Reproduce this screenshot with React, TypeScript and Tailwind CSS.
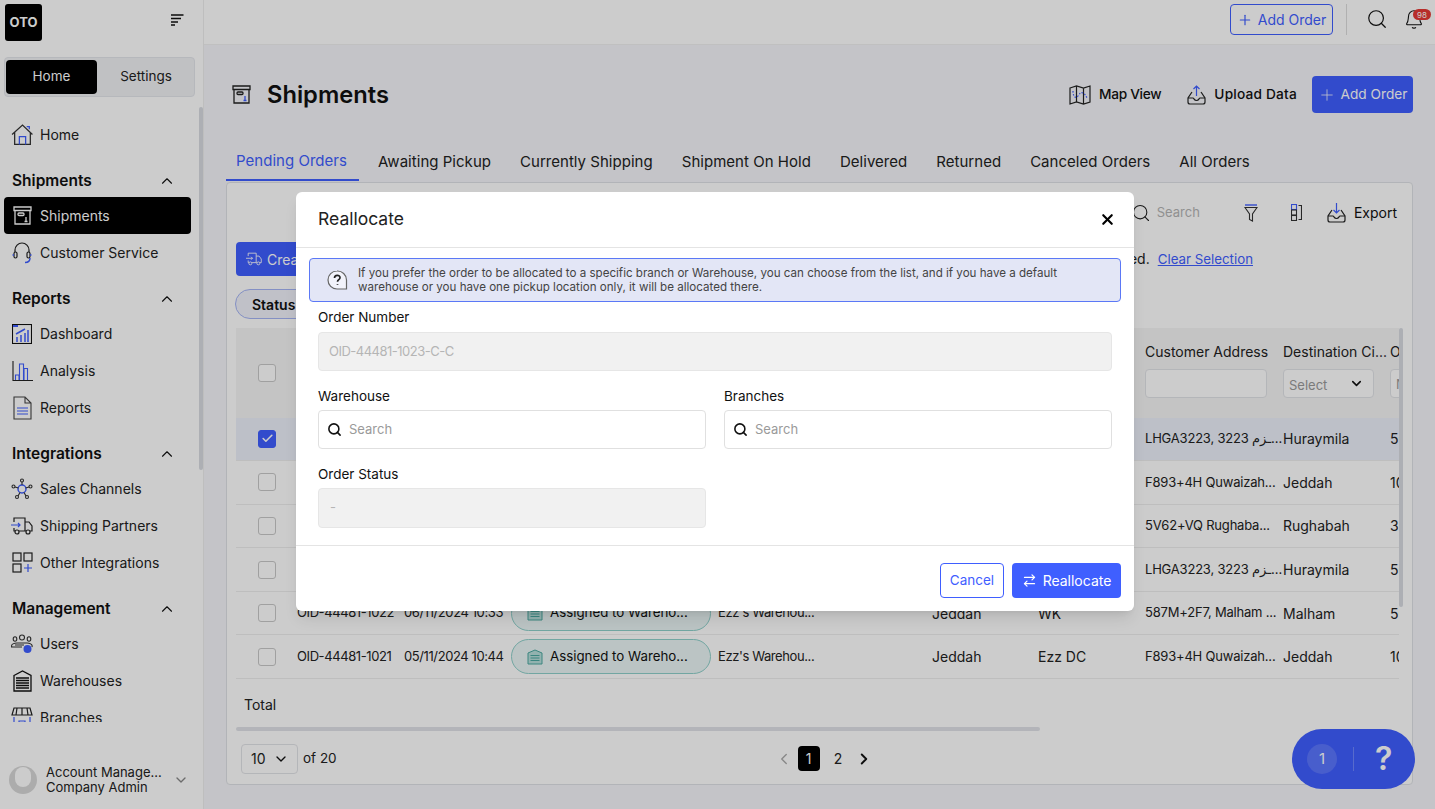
import React from "react";
import { ChevronUp, ChevronDown, ChevronLeft, ChevronRight, Plus, Search, X, Check, ArrowRightLeft } from "lucide-react";

const BLUE = "#3f5eff";

const HomeIcon = () => (
  <svg width="23" height="23" viewBox="0 0 22 22" fill="none" stroke="#333" strokeWidth="1.2">
    <path d="M1 11 11 2l9.500 9M3.500 9v11.500h15V9" />
    <path d="M8 20.500V13h6v7.500M15 3.500h2.500V6" stroke={BLUE} />
  </svg>
);
const BoxIcon = ({ color = "#222", accent = BLUE, light = false }: { color?: string; accent?: string; light?: boolean }) => (
  <svg width="19" height="19" viewBox="0 0 19 19" fill="none" stroke={light ? "#fff" : color} strokeWidth="1.300">
    <path d="M1 1h17v3.500H1zM2 4.500V18h15V4.500" />
    <rect x="5" y="7" width="6" height="2.500" rx="1" />
    <path d="M13 11v4M11.500 15.500h3" stroke={light ? "#fff" : accent} />
  </svg>
);
const HeadsetIcon = () => (
  <svg width="22" height="22" viewBox="0 0 22 22" fill="none" stroke="#222" strokeWidth="1.200">
    <path d="M4 10V8a7 7 0 0 1 14 0v2" />
    <rect x="3" y="10" width="3" height="6" rx="1.500" />
    <rect x="16" y="10" width="3" height="6" rx="1.500" />
    <path d="M19 16c0 3-2 4.500-5 4.500M1.500 13H3M19 13h1.500" stroke={BLUE} strokeWidth="1.500" />
  </svg>
);
const DashIcon = () => (
  <svg width="20" height="20" viewBox="0 0 20 20" fill="none" stroke="#111" strokeWidth="1.100">
    <rect x="0.500" y="0.500" width="19" height="19" />
    <path d="M1 2h5" stroke={BLUE} strokeWidth="2" />
    <path d="M5 13v5M9 11v7M13 9v9M16 6v12M4 10l9-5" stroke={BLUE} strokeWidth="1.500" />
  </svg>
);
const BarsIcon = () => (
  <svg width="21" height="20" viewBox="0 0 21 20" fill="none" stroke={BLUE} strokeWidth="1.100">
    <path d="M1 0v19.500h20" stroke="#222" />
    <path d="M3.500 19v-5h3.500v5M7.500 19V3h4v16M12 19V7.500h3.500V19" />
  </svg>
);
const DocIcon = () => (
  <svg width="19" height="24" viewBox="0 0 19 24" fill="none" stroke="#444" strokeWidth="1.100">
    <path d="M1 1h11l6 6v16H1zM12 1v6h6" />
    <path d="M4 12h11M4 15h11M4 18h11" stroke={BLUE} />
  </svg>
);
const HubIcon = () => (
  <svg width="22" height="22" viewBox="0 0 22 22" fill="none" stroke="#333" strokeWidth="1.100">
    <circle cx="11" cy="11" r="4" stroke={BLUE} strokeWidth="1.500" />
    <circle cx="11" cy="2.500" r="1.500" />
    <circle cx="2.500" cy="8.500" r="1.500" />
    <circle cx="19.500" cy="8.500" r="1.500" />
    <circle cx="6" cy="19" r="1.500" />
    <circle cx="16" cy="19" r="1.500" />
    <path d="M11 4v3M4 9l3.500 1M18 9l-3.500 1M7 18l2-3.500M15 18l-2-3.500" />
  </svg>
);
const TruckIcon = ({ stroke = "#222", accent = BLUE, width = 22, height = 18 }: { stroke?: string; accent?: string; width?: number; height?: number }) => (
  <svg width={width} height={height} viewBox="0 0 22 18" fill="none" stroke={stroke} strokeWidth="1.200">
    <path d="M3 5V1h11v13H8M3 11v3h1M14 5h4l3 4v5h-2M14 14h1" />
    <circle cx="6" cy="15" r="2" />
    <circle cx="17" cy="15" r="2" />
    <path d="M0 8h9M7 6l2 2-2 2" stroke={accent} />
  </svg>
);
const GridPlusIcon = () => (
  <svg width="21" height="21" viewBox="0 0 21 21" fill="none" stroke="#222" strokeWidth="1.200">
    <rect x="1" y="1" width="8" height="8" />
    <rect x="12" y="1" width="8" height="8" />
    <rect x="1" y="12" width="8" height="8" />
    <path d="M16 12v8M12 16h8" stroke={BLUE} />
  </svg>
);
const UsersIcon = () => (
  <svg width="24" height="20" viewBox="0 0 24 20" fill="none" stroke="#333" strokeWidth="1.100">
    <circle cx="12" cy="3.500" r="2.500" />
    <ellipse cx="5" cy="5" rx="1.800" ry="2.200" />
    <ellipse cx="19" cy="5" rx="1.800" ry="2.200" />
    <path d="M2 13c-2-3 3-4 5-4h10c2 0 6 1 5 4M1 13h11M5 11h9" />
    <circle cx="17.500" cy="15" r="4" fill={BLUE} stroke="none" />
  </svg>
);
const GarageIcon = () => (
  <svg width="19" height="22" viewBox="0 0 19 22" fill="none" stroke="#111" strokeWidth="1.300">
    <path d="M1 5.500 9.500 1 18 5.500V21H1z" />
    <path d="M3 8h13M3 10.500h13M3 13h13M3 15.500h13M3 18h13" strokeWidth="1.400" />
  </svg>
);
const ShopIcon = () => (
  <svg width="22" height="22" viewBox="0 0 22 22" fill="none" stroke="#222" strokeWidth="1.200">
    <path d="M3 1h16l2 7H1zM6 1 5 8M11 1v7M16 1l1 7" />
    <path d="M3 10v11h16V10M8 21v-7h6v7" stroke={BLUE} />
  </svg>
);
const WarehousePillIcon = () => (
  <svg width="16" height="16" viewBox="0 0 16 16" fill="#5ab4ac" fillOpacity="0.35" stroke="#4aa8a0" strokeWidth="1">
    <path d="M1 4 8 1l7 3v11H1z" />
    <path d="M3.500 6.500h9M3.500 9h9M3.500 11.500h9" />
  </svg>
);
const MapIcon = () => (
  <svg width="22" height="20" viewBox="0 0 22 20" fill="none" stroke="#222" strokeWidth="1.200">
    <path d="M1 3 7.500 1 14.500 3 21 1v16l-6.500 2-7-2L1 19zM7.500 1v16M14.500 3v16" />
    <path d="M4 6c0 6 3 8 5 5s3-4 5-3 3 3 4 5" stroke={BLUE} strokeDasharray="1.500 1.500" />
  </svg>
);
const TrayIcon = ({ up }: { up: boolean }) => (
  <svg width="19" height="20" viewBox="0 0 19 20" fill="none" stroke="#222" strokeWidth="1.200">
    <path d="M5 7 1 13v4a2 2 0 0 0 2 2h13a2 2 0 0 0 2-2v-4l-4-6" />
    <path d="M1 13h5c1 0 1 2.500 3.500 2.500S12 13 13 13h5" />
    <path d={up ? "M9.500 11V1M6.500 4l3-3 3 3" : "M9.500 0v10M6.500 7l3 3 3-3"} stroke={BLUE} />
  </svg>
);
const FunnelIcon = () => (
  <svg width="14" height="18" viewBox="0 0 14 18" fill="none" stroke="#333" strokeWidth="1.100">
    <path d="M1 1h12" stroke={BLUE} strokeWidth="1.400" />
    <path d="M1 3.500h12L8.500 10v7l-3-1.500V10z" />
  </svg>
);
const ColumnsIcon = () => (
  <svg width="11" height="17" viewBox="0 0 11 17" fill="none" stroke="#333" strokeWidth="1.100">
    <rect x="0.500" y="0.500" width="5" height="5" stroke={BLUE} />
    <rect x="0.500" y="6" width="5" height="5" />
    <rect x="0.500" y="11.500" width="5" height="5" />
    <path d="M7.500 1.500h3v14h-3" />
  </svg>
);
const BellIcon = () => (
  <svg width="20" height="21" viewBox="0 0 20 23" fill="none" stroke="#111" strokeWidth="1.200">
    <path d="M2 16c2-2 1.500-5 2-8a6 6 0 0 1 12 0c.5 3 0 6 2 8 .5 1-.5 1.200-1 1.200H3c-.5 0-1.500-.2-1-1.200zM8 20c.5 1.300 3.500 1.300 4 0" />
  </svg>
);
const HelpBubble = () => (
  <svg width="21" height="21" viewBox="0 0 21 21" fill="none" stroke="#666" strokeWidth="1.200">
    <path d="M10 1a9 9 0 1 0 0 18h9.500v-9A9 9 0 0 0 10 1z" fill="#f2f3fb" />
    <path d="M7.500 8c0-3.500 5.500-3.500 5.500-.3 0 2-2.500 2-2.500 4M10.500 14v.8" stroke="#222" strokeWidth="1.700" />
  </svg>
);

const NavItem = ({ icon, label, active }: { icon: React.ReactNode; label: string; active?: boolean }) => (
  <div className={`flex h-[37px] w-[187px] items-center rounded-[4px] ${active ? "bg-black text-white" : "text-[#222]"}`}>
    <div className="flex w-[36px] shrink-0 items-center justify-center">{icon}</div>
    <span className="text-[14px]">{label}</span>
  </div>
);

const NavGroup = ({ title, children }: { title: string; children: React.ReactNode }) => (
  <div className="mb-[12px]">
    <div className="flex h-[32px] w-[187px] items-center justify-between pl-[8px] pr-[15px]">
      <span className="text-[15.500px] font-semibold text-[#111]">{title}</span>
      <ChevronUp size={18} strokeWidth={1.500} className="text-[#111]" />
    </div>
    {children}
  </div>
);

const Sidebar = () => (
  <aside className="flex h-full w-[204px] shrink-0 flex-col border-r border-[#eeeeee] bg-white">
    <div className="flex items-start justify-between pl-[5px] pr-[19px] pt-[4px]">
      <div className="flex h-[37px] w-[37px] items-center justify-center rounded-[3px] bg-black text-[13px] font-bold text-white">OTO</div>
      <svg width="14" height="12" viewBox="0 0 14 12" className="mt-[10px]" stroke="#111" strokeWidth="1.300">
        <path d="M1 1h12.500M1 4.500h10M1 8h7M1 11h4" />
      </svg>
    </div>
    <div className="ml-[4px] mt-[16px] flex h-[40px] w-[191px] items-center rounded-[4px] border border-[#e4e6ec] bg-[#f1f2f4] pl-[1px] pr-[2px] pb-[1px] text-[13.500px]">
      <div className="flex h-[34px] w-[91px] items-center justify-center rounded-[4px] bg-black text-white">Home</div>
      <div className="flex-1 pl-[3px] text-center text-[#222]">Settings</div>
    </div>
    <div className="relative mt-[10px] h-[615px] overflow-hidden">
      <div className="absolute right-0 top-0 h-[363px] w-[4px] rounded-full bg-[#d9dbe2]" />
      <div className="pl-[4px] pt-[9px]">
        <div className="mb-[12px]">
          <NavItem icon={<HomeIcon />} label="Home" />
        </div>
        <NavGroup title="Shipments">
          <NavItem icon={<BoxIcon light />} label="Shipments" active />
          <NavItem icon={<HeadsetIcon />} label="Customer Service" />
        </NavGroup>
        <NavGroup title="Reports">
          <NavItem icon={<DashIcon />} label="Dashboard" />
          <NavItem icon={<BarsIcon />} label="Analysis" />
          <NavItem icon={<DocIcon />} label="Reports" />
        </NavGroup>
        <NavGroup title="Integrations">
          <NavItem icon={<HubIcon />} label="Sales Channels" />
          <NavItem icon={<TruckIcon />} label="Shipping Partners" />
          <NavItem icon={<GridPlusIcon />} label="Other Integrations" />
        </NavGroup>
        <NavGroup title="Management">
          <NavItem icon={<UsersIcon />} label="Users" />
          <NavItem icon={<GarageIcon />} label="Warehouses" />
          <NavItem icon={<ShopIcon />} label="Branches" />
        </NavGroup>
      </div>
    </div>
    <div className="mt-auto mb-[14px] flex items-center pl-[9px] pr-[14px]">
      <div className="relative h-[28px] w-[28px] overflow-hidden rounded-full bg-[#d8d8d8]">
        <div className="absolute left-[6px] top-[1px] h-[20px] w-[16px] rounded-full bg-white" />
      </div>
      <div className="ml-[9px] flex-1 text-[13px] leading-[15px] text-[#222]">
        <div>Account Manage...</div>
        <div>Company Admin</div>
      </div>
      <ChevronDown size={16} className="text-[#888]" />
    </div>
  </aside>
);

const tabs = ["Pending Orders", "Awaiting Pickup", "Currently Shipping", "Shipment On Hold", "Delivered", "Returned", "Canceled Orders", "All Orders"];

const ROW_COLS = "grid grid-cols-[61px_107px_107px_207px_214px_106px_107px_138px_107px_60px] items-center";

type Row = {
  id?: string;
  date?: string;
  warehouse?: string;
  city?: string;
  branch?: string;
  address: string;
  dest: string;
  amount: string;
  checked?: boolean;
};

const rows: Row[] = [
  { address: "LHGA3223, 3223 ـزم...", dest: "Huraymila", amount: "50", checked: true },
  { address: "F893+4H Quwaizah...", dest: "Jeddah", amount: "10" },
  { address: "5V62+VQ Rughaba...", dest: "Rughabah", amount: "30" },
  { address: "LHGA3223, 3223 ـزم...", dest: "Huraymila", amount: "50" },
  { id: "OID-44481-1022", date: "06/11/2024 10:33", warehouse: "Ezz's Warehou...", city: "Jeddah", branch: "WK", address: "587M+2F7, Malham ...", dest: "Malham", amount: "50" },
  { id: "OID-44481-1021", date: "05/11/2024 10:44", warehouse: "Ezz's Warehou...", city: "Jeddah", branch: "Ezz DC", address: "F893+4H Quwaizah...", dest: "Jeddah", amount: "10" },
];

const CheckBox = ({ checked }: { checked?: boolean }) => (
  <div className={`ml-[22px] flex h-[18px] w-[18px] items-center justify-center rounded-[3px] border ${checked ? "border-[#3f5eff] bg-[#3f5eff]" : "border-[#c8c8c8] bg-white"}`}>
    {checked && <Check size={13} strokeWidth={3} className="text-white" />}
  </div>
);

const OrdersTable = () => (
  <div className="relative mx-[9px] mt-[9px] overflow-hidden text-[14px] text-[#222]">
    <div className="absolute right-0 top-0 h-[279px] w-[4px] rounded-full bg-[#d9dbe2]" />
    <div className="mr-[4px] overflow-hidden">
      <div className={`${ROW_COLS} h-[89.500px] w-[1250px] bg-[#f5f5f5]`}>
        <CheckBox />
        <div className="col-start-8">
          <div className="mb-[7px] mt-[-6px] whitespace-nowrap">Customer Address</div>
          <div className="h-[29px] w-[122px] rounded-[4px] border border-[#e2e4e8] bg-white" />
        </div>
        <div>
          <div className="mb-[7px] mt-[-6px] whitespace-nowrap">Destination Ci...</div>
          <div className="flex h-[29px] w-[91px] items-center justify-between rounded-[4px] border border-[#e2e4e8] bg-white pl-[5px] pr-[9px] text-[13px] text-[#9a9a9a]">
            <span className="pt-[3px]">Select</span>
            <ChevronDown size={15} strokeWidth={2.500} className="text-[#111]" />
          </div>
        </div>
        <div>
          <div className="mb-[7px] mt-[-6px]">O</div>
          <div className="h-[29px] w-[60px] rounded-[4px] border border-[#e2e4e8] bg-white pl-[5px] pt-[5px] text-[13px] text-[#9a9a9a]">N</div>
        </div>
      </div>
      {rows.map((r, i) => (
        <div key={i} className={`${ROW_COLS} h-[43.6px] w-[1250px] border-b border-[#eeeeee] ${r.checked ? "bg-[#edf1fb]" : ""}`}>
          <CheckBox checked={r.checked} />
          <div className="whitespace-nowrap text-[13px] tracking-[-0.4px]">{r.id}</div>
          <div className="whitespace-nowrap text-[13px] tracking-[-0.4px]">{r.date}</div>
          <div>
            {r.id && (
              <div className="flex h-[35px] w-[200px] items-center gap-[7px] rounded-full border border-[#8fd0cb] bg-[#eaf6f5] pl-[15px] text-[13.300px] text-[#111]">
                <WarehousePillIcon />
                Assigned to Wareho...
              </div>
            )}
          </div>
          <div className="whitespace-nowrap text-[13px] tracking-[-0.4px]">{r.warehouse}</div>
          <div>{r.city}</div>
          <div>{r.branch}</div>
          <div className="whitespace-nowrap text-[13px] tracking-[-0.2px]">{r.address}</div>
          <div>{r.dest}</div>
          <div>{r.amount}</div>
        </div>
      ))}
      <div className="flex h-[47.500px] items-center pl-[8px] pt-[3px]">Total</div>
    </div>
  </div>
);

const Card = () => (
  <div className="relative mt-[1px] flex min-h-0 flex-1 flex-col rounded-[4px] border border-[#dfe1e6] bg-white">
    <div className="flex h-[59px] items-center justify-end text-[14px]">
      <Search size={20} strokeWidth={1.300} className="mr-[6px] text-[#222]" />
      <span className="mr-[44px] text-[13px] text-[#b5b5b5]">Search</span>
      <div className="mr-[33px]"><FunnelIcon /></div>
      <div className="mr-[25px]"><ColumnsIcon /></div>
      <div className="mr-[8px]"><TrayIcon up={false} /></div>
      <span className="mr-[15px] text-[#111]">Export</span>
    </div>
    <div className="flex h-[34px] items-center justify-between pl-[9px] pr-[159px] text-[14px]">
      <div className="flex h-[34px] w-[120px] items-center gap-[5px] rounded-[4px] bg-[#3f5eff] pl-[10px] text-white">
        <TruckIcon stroke="#ffffff" accent="#ffffff" width={16} height={14} />
        Create
      </div>
      <div className="text-[#222]">
        1 order selected.<span className="ml-[8px] text-[13.300px] text-[#3f5eff] underline">Clear Selection</span>
      </div>
    </div>
    <div className="ml-[8px] mt-[13px] flex h-[30px] w-[110px] items-center rounded-full border border-[#a5b4f5] bg-[#f0f2fb] pl-[16px] text-[14px] font-semibold text-[#111]">Status</div>
    <OrdersTable />
    <div className="mx-[9px] h-[4px] w-[804px] rounded-full bg-[#e0e2e8]" />
    <div className="relative mt-[13px] flex items-center pl-[14px] text-[14px] text-[#222]">
      <div className="flex h-[30px] w-[57px] items-center justify-between rounded-[4px] border border-[#e2e4e8] pl-[9px] pr-[8px]">
        10
        <ChevronDown size={16} strokeWidth={2} className="text-[#111]" />
      </div>
      <span className="ml-[5px] text-[13.500px]">of 20</span>
      <div className="ml-[438px] flex items-center">
        <ChevronLeft size={18} strokeWidth={1.800} className="text-[#aaaaaa]" />
        <div className="ml-[5px] flex h-[25px] w-[22px] items-center justify-center rounded-[4px] bg-black text-white">1</div>
        <span className="ml-[14px]">2</span>
        <ChevronRight size={18} strokeWidth={2.500} className="ml-[13px] text-[#111]" />
      </div>
    </div>
  </div>
);

const Main = () => (
  <main className="flex min-w-0 flex-1 flex-col bg-[#f5f6fa]">
    <header className="flex h-[45px] shrink-0 items-start justify-end border-b border-[#f0f0f0] bg-white pt-[4px]">
      <div className="flex h-[31px] w-[103px] items-center justify-center gap-[5px] rounded-[4px] border border-[#3f5eff] text-[14px] text-[#3f5eff]">
        <Plus size={16} strokeWidth={1.800} />
        Add Order
      </div>
      <div className="ml-[13px] h-[31px] w-px bg-[#dddddd]" />
      <Search size={22} strokeWidth={1.300} className="ml-[19px] mt-[4px] text-[#111]" />
      <div className="relative ml-[16px] mr-[11px] mt-[5px]">
        <BellIcon />
        <div className="absolute left-[9px] top-0 flex h-[11px] w-[18px] items-center justify-center rounded-full bg-[#e53935] text-[8px] text-white">98</div>
      </div>
    </header>
    <div className="flex min-h-0 flex-1 flex-col px-[22px] pb-[24px]">
      <div className="mt-[31px] flex h-[37px] shrink-0 items-center">
        <div className="ml-[6px]"><BoxIcon /></div>
        <h1 className="ml-[16px] text-[23.700px] font-semibold text-[#111]">Shipments</h1>
        <div className="ml-auto flex items-center text-[13.700px] font-medium text-[#111]">
          <MapIcon />
          <span className="ml-[8px] tracking-[-0.3px]">Map View</span>
          <div className="ml-[26px]"><TrayIcon up /></div>
          <span className="ml-[8px] tracking-[0.2px]">Upload Data</span>
          <div className="ml-[15px] flex h-[37px] w-[101px] items-center justify-center gap-[5px] rounded-[4px] bg-[#3f5eff] font-normal text-white">
            <Plus size={18} strokeWidth={1} />
            Add Order
          </div>
        </div>
      </div>
      <div className="mt-[30px] flex h-[38px] shrink-0 gap-[9px] text-[15px] tracking-[0.03px] text-[#222]">
        {tabs.map((t, i) => (
          <div key={t} className={`flex items-center whitespace-nowrap px-[10px] ${i === 0 ? "w-[133px] border-b-2 border-[#3f5eff] text-[#3f5eff]" : ""}`}>{t}</div>
        ))}
      </div>
      <Card />
    </div>
  </main>
);

const Modal = () => (
  <div className="absolute left-[296px] top-[192px] h-[419px] w-[838px] rounded-[6px] bg-white shadow-lg text-[#222]">
    <div className="flex h-[56px] items-center justify-between border-b border-[#e4e4e4] pl-[22px] pr-[18px]">
      <span className="text-[17.500px]">Reallocate</span>
      <X size={17} strokeWidth={3} className="text-black" />
    </div>
    <div className="mx-[13px] mt-[10px] flex h-[44px] items-center rounded-[4px] border border-[#5b78f6] bg-[#e3e6f6] pl-[17px] text-[11.600px] leading-[14px] text-[#444]">
      <div className="mr-[10px] shrink-0"><HelpBubble /></div>
      <p>If you prefer the order to be allocated to a specific branch or Warehouse, you can choose from the list, and if you have a default<br />warehouse or you have one pickup location only, it will be allocated there.</p>
    </div>
    <div className="px-[22px]">
      <label className="mt-[7px] block text-[13.500px] leading-[16px] text-[#111]">Order Number</label>
      <div className="mt-[7px] flex h-[39px] items-center rounded-[4px] border border-[#e6e6e6] bg-[#f1f1f1] pl-[10px] text-[13px] tracking-[-0.5px] text-[#b5b5b5]">OID-44481-1023-C-C</div>
      <div className="mt-[17px] grid grid-cols-2 gap-x-[18px]">
        <div>
          <label className="block text-[13.500px] leading-[16px] text-[#111]">Warehouse</label>
          <div className="mt-[6px] flex h-[39px] items-center rounded-[4px] border border-[#e0e0e0] pl-[8px] text-[13px] text-[#9a9a9a]">
            <Search size={15} strokeWidth={2.500} className="mr-[7px] text-[#111]" />
            Search
          </div>
        </div>
        <div>
          <label className="block text-[13.500px] leading-[16px] text-[#111]">Branches</label>
          <div className="mt-[6px] flex h-[39px] items-center rounded-[4px] border border-[#e0e0e0] pl-[8px] text-[13px] text-[#9a9a9a]">
            <Search size={15} strokeWidth={2.500} className="mr-[7px] text-[#111]" />
            Search
          </div>
        </div>
        <div className="mt-[17px]">
          <label className="block text-[13.500px] leading-[16px] text-[#111]">Order Status</label>
          <div className="mt-[6px] flex h-[40px] items-center rounded-[4px] border border-[#e6e6e6] bg-[#f1f1f1] pl-[11px] text-[13px] text-[#b5b5b5]">-</div>
        </div>
      </div>
    </div>
    <div className="mt-[17px] flex items-start justify-end gap-[8px] border-t border-[#e4e4e4] pr-[13px] pt-[17px] text-[14px]">
      <div className="flex h-[35px] w-[64px] items-center justify-center rounded-[4px] border border-[#3f5eff] text-[13.500px] text-[#3f5eff]">Cancel</div>
      <div className="flex h-[35px] w-[109px] items-center justify-center gap-[6px] rounded-[4px] bg-[#3f5fff] text-white">
        <ArrowRightLeft size={15} strokeWidth={2} />
        Reallocate
      </div>
    </div>
  </div>
);

export default function App() {
  return (
    <div className="relative flex h-screen w-full overflow-hidden font-['Inter','DejaVu_Sans',sans-serif]">
      <Sidebar />
      <Main />
      {/* help widget sits under the dim layer */}
      <div className="absolute left-[1292px] top-[729px] flex h-[60px] w-[123px] items-center rounded-full bg-[#3f5eff] text-white">
        <div className="ml-[15px] flex h-[30px] w-[30px] items-center justify-center rounded-full bg-white/15 text-[15px]">1</div>
        <div className="ml-[16px] h-[24px] w-px bg-white/25" />
        <span className="ml-[21px] text-[32px] font-semibold">?</span>
      </div>
      <div className="absolute inset-0 bg-black/20" />
      <Modal />
    </div>
  );
}
